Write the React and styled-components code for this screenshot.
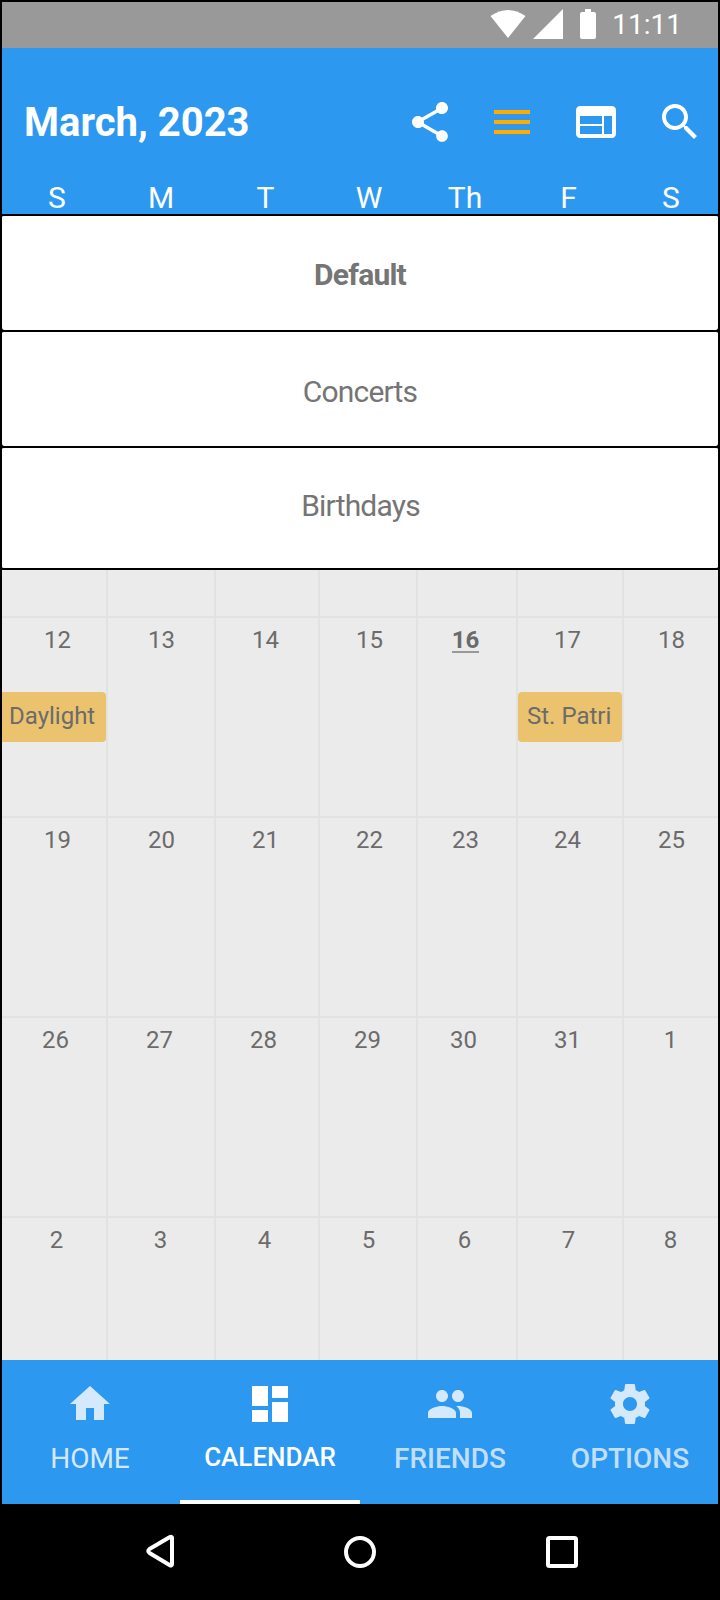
import React from "react";
import styled, { createGlobalStyle, css } from "styled-components";

const Global = createGlobalStyle`
  * { box-sizing: border-box; }
  body { margin: 0; background: #000; }
`;

const Phone = styled.div`
  width: 720px;
  height: 1600px;
  display: flex;
  flex-direction: column;
  border: 2px solid #000;
  border-bottom: 0;
  overflow: hidden;
  background: #000;
  font-family: Roboto, sans-serif;
`;

const StatusBar = styled.div`
  flex: none;
  height: 46px;
  padding: 7px 36px 0 0;
  display: flex;
  justify-content: flex-end;
  align-items: flex-start;
  background: #999;
  color: #fff;
`;

const StatusIcons = styled.svg`
  display: block;
  width: 106px;
  height: 32px;
  margin-right: 16px;
`;

const Clock = styled.span`
  font-size: 28px;
  line-height: 32px;
`;

const Header = styled.header`
  flex: none;
  height: 166px;
  display: flex;
  flex-direction: column;
  background: #2d98f0;
  color: #fff;
`;

const TitleBar = styled.div`
  height: 132px;
  padding: 16px 14px 0 22px;
  display: flex;
  align-items: center;
`;

const Title = styled.h1`
  flex: 1;
  margin: 0;
  padding-top: 2px;
  font-size: 40px;
  line-height: 48px;
  font-weight: 700;
  white-space: nowrap;
`;

const Actions = styled.div`
  display: grid;
  grid-template-columns: 82px 84px 84px 48px;
`;

const Icon = styled.svg`
  display: block;
  flex: none;
  width: 48px;
  height: 48px;
  fill: currentColor;
  color: ${(p) => p.$color || "inherit"};
`;

const columns = css`
  display: grid;
  grid-template-columns: 106px 108px 104px 98px 100px 106px 94px;
`;

const Weekdays = styled.div`
  ${columns}
  height: 34px;
`;

const Weekday = styled.span`
  text-align: center;
  font-size: 30px;
  line-height: 36px;
  margin-left: ${(p) => p.$shift}px;
`;

const Menu = styled.ul`
  flex: none;
  margin: 0 -1px;
  padding: 0;
  height: 356px;
  list-style: none;
  background: #000;
`;

const MenuItem = styled.li`
  height: ${(p) => p.$height}px;
  border: 2px solid #000;
  border-width: 2px 1px 0;
  display: flex;
  align-items: flex-start;
  justify-content: center;
  padding-top: ${(p) => p.$top}px;
  background: #fff;
  border-radius: 3px;
  color: #757575;
  font-size: 30px;
  line-height: 36px;
  letter-spacing: -0.8px;
  font-weight: ${(p) => (p.$selected ? 700 : 400)};
  &:last-child {
    border-bottom-width: 2px;
    padding-left: 1px;
  }
`;

const Calendar = styled.main`
  flex: none;
  height: 790px;
  overflow: hidden;
  background: #ebebeb;
`;

const Week = styled.div`
  ${columns}
  height: ${(p) => (p.$short ? 48 : 200)}px;
`;

const Day = styled.div`
  min-width: 0;
  border-right: 2px solid #e2e2e2;
  border-bottom: 2px solid #e2e2e2;
  padding-top: 7px;
  display: flex;
  flex-direction: column;
  align-items: flex-start;
  &:last-child { border-right: 0; }
`;

const DayNumber = styled.span`
  align-self: center;
  margin-left: ${(p) => p.$shift * 2}px;
  color: #6b6b6b;
  font-size: 24px;
  line-height: 30px;
  font-weight: ${(p) => (p.$today ? 700 : 400)};
  ${(p) => p.$today && css`
    &::after {
      content: "";
      display: block;
      height: 2px;
      margin-top: -4px;
      background: #999;
    }
  `}
`;

const Event = styled.div`
  width: 104px;
  height: 50px;
  margin-top: 37px;
  padding-left: ${(p) => p.$inset}px;
  border-radius: ${(p) => (p.$open ? "0 4px 4px 0" : "4px")};
  background: #ebc26e;
  color: #6b6b6b;
  font-size: 24px;
  line-height: 48px;
  white-space: nowrap;
  overflow: hidden;
`;

const Tabs = styled.nav`
  flex: none;
  height: 144px;
  margin: 0 -2px;
  display: grid;
  grid-template-columns: repeat(4, 180px);
  background: #2d98f0;
`;

const Tab = styled.div`
  display: flex;
  flex-direction: column;
  align-items: center;
  padding-top: 20px;
  color: #d5e9fd;
  ${(p) => p.$active && css`
    color: #fff;
    border-bottom: 4px solid #fff;
  `}
`;

const TabLabel = styled.span`
  margin-top: ${(p) => p.$top}px;
  font-size: ${(p) => p.$size}px;
  line-height: 32px;
  font-weight: ${(p) => p.$weight};
  color: ${(p) => p.$color};
  white-space: nowrap;
`;

const SystemBar = styled.div`
  flex: 1;
  padding: 28px 0 0 139px;
  display: grid;
  grid-template-columns: 199px 202px 40px;
`;

const SystemIcon = styled.svg`
  display: block;
  width: 40px;
  height: 40px;
  fill: none;
  stroke: #fff;
  stroke-width: 4;
  stroke-linejoin: round;
`;

const icons = {
  share: "M18 16.08c-.76 0-1.44.3-1.96.77L8.91 12.7c.05-.23.09-.46.09-.7s-.04-.47-.09-.7l7.05-4.11c.54.5 1.25.81 2.04.81 1.66 0 3-1.34 3-3s-1.34-3-3-3-3 1.34-3 3c0 .24.04.47.09.7L8.04 9.81C7.5 9.31 6.79 9 6 9c-1.66 0-3 1.34-3 3s1.34 3 3 3c.79 0 1.5-.31 2.04-.81l7.12 4.16c-.05.21-.08.43-.08.65 0 1.61 1.31 2.92 2.92 2.92 1.61 0 2.92-1.31 2.92-2.92s-1.31-2.92-2.92-2.92z",
  menu: "M3 18h18v-2H3v2zm0-5h18v-2H3v2zm0-7v2h18V6H3z",
  web: "M20 4H4c-1.1 0-1.99.9-1.99 2L2 18c0 1.1.9 2 2 2h16c1.1 0 2-.9 2-2V6c0-1.1-.9-2-2-2zm-5 14H4v-4h11v4zm0-5H4V9h11v4zm5 5h-4V9h4v9z",
  search: "M15.5 14h-.79l-.28-.27C15.41 12.59 16 11.11 16 9.5 16 5.91 13.09 3 9.5 3S3 5.91 3 9.5 5.91 16 9.5 16c1.61 0 3.09-.59 4.23-1.57l.27.28v.79l5 4.99L20.49 19l-4.99-5zm-6 0C7.01 14 5 11.99 5 9.5S7.01 5 9.5 5 14 7.01 14 9.5 11.99 14 9.5 14z",
  home: "M10 20v-6h4v6h5v-8h3L12 3 2 12h3v8z",
  dashboard: "M3 13h8V3H3v10zm0 8h8v-6H3v6zm10 0h8V11h-8v10zm0-18v6h8V3h-8z",
  people: "M16 11c1.66 0 2.99-1.34 2.99-3S17.66 5 16 5c-1.66 0-3 1.34-3 3s1.34 3 3 3zm-8 0c1.66 0 2.99-1.34 2.99-3S9.66 5 8 5C6.34 5 5 6.34 5 8s1.34 3 3 3zm0 2c-2.33 0-7 1.17-7 3.5V19h14v-2.5c0-2.33-4.67-3.5-7-3.5zm8 0c-.29 0-.62.02-.97.05 1.16.84 1.97 1.97 1.97 3.45V19h6v-2.5c0-2.33-4.67-3.5-7-3.5z",
  settings: "M19.43 12.98c.04-.32.07-.64.07-.98s-.03-.66-.07-.98l2.11-1.65c.19-.15.24-.42.12-.64l-2-3.46c-.12-.22-.39-.3-.61-.22l-2.49 1c-.52-.4-1.08-.73-1.69-.98l-.38-2.65C14.460 2.180 14.250 2 14 2h-4c-.25 0-.46.18-.49.42l-.38 2.65c-.61.25-1.170.59-1.690.98l-2.490-1c-.23-.09-.49 0-.61.22l-2 3.460c-.13.22-.07.49.12.64l2.110 1.650c-.04.32-.07.65-.07.98s.03.66.07.98l-2.110 1.650c-.19.15-.24.42-.12.64l2 3.460c.12.22.39.3.61.22l2.490-1c.52.4 1.080.73 1.690.98l.38 2.650c.03.24.24.42.49.42h4c.25 0 .46-.18.49-.42l.38-2.650c.61-.25 1.170-.59 1.690-.98l2.490 1c.23.09.49 0 .61-.22l2-3.460c.12-.22.07-.49-.12-.64l-2.110-1.650zM12 15.500c-1.930 0-3.500-1.570-3.500-3.500s1.570-3.500 3.500-3.500 3.500 1.570 3.500 3.500-1.570 3.500-3.500 3.500z",
};

const Glyph = ({ name, color }) => (
  <Icon viewBox="0 0 24 24" $color={color}><path d={icons[name]} /></Icon>
);

const weekdays = [["S", 4], ["M", -2], ["T", -5], ["W", 0], ["Th", -6], ["F", -5], ["S", 0]];

const wideShifts = [3.5, 0.5, -1.5, 1.5, -1.5, -2.5, 0.5];

const weeks = [
  {
    days: [12, 13, 14, 15, 16, 17, 18],
    shifts: wideShifts,
    events: {
      12: { title: "Daylight", inset: 7, open: true },
      17: { title: "St. Patri", inset: 9 },
    },
  },
  { days: [19, 20, 21, 22, 23, 24, 25], shifts: wideShifts },
  { days: [26, 27, 28, 29, 30, 31, 1], shifts: [1.5, -1.5, -3.5, -0.5, -3.5, -2.5, -0.5] },
  { days: [2, 3, 4, 5, 6, 7, 8], shifts: [2.5, -0.5, -2.5, 0.5, -2.5, -1.5, -0.5] },
];

const menu = [
  { label: "Default", height: 116, top: 41, selected: true },
  { label: "Concerts", height: 116, top: 42 },
  { label: "Birthdays", height: 124, top: 40 },
];

const tabs = [
  { label: "HOME", icon: "home", size: 28, weight: 400, color: "#d5e9fd", top: 15 },
  { label: "CALENDAR", icon: "dashboard", size: 26, weight: 500, color: "#fff", top: 13, active: true },
  { label: "FRIENDS", icon: "people", size: 28, weight: 500, color: "#c0dffb", top: 15 },
  { label: "OPTIONS", icon: "settings", size: 28, weight: 500, color: "#c0dffb", top: 15 },
];

export default function App() {
  return (
    <Phone>
      <Global />
      <StatusBar>
        <StatusIcons viewBox="490 9 106 32" fill="#fff">
          <path d="M490.500 16Q508 4 525.500 16L508 38Z" />
          <path d="M563 9V39H533Z" />
          <path d="M585 9h6v3h3q2 0 2 2v23q0 2-2 2h-12q-2 0-2-2V14q0-2 2-2h3Z" />
        </StatusIcons>
        <Clock>11:11</Clock>
      </StatusBar>
      <Header>
        <TitleBar>
          <Title>March, 2023</Title>
          <Actions>
            <Glyph name="share" />
            <Glyph name="menu" color="#ffab00" />
            <Glyph name="web" />
            <Glyph name="search" />
          </Actions>
        </TitleBar>
        <Weekdays>
          {weekdays.map(([name, shift], i) => <Weekday key={i} $shift={shift}>{name}</Weekday>)}
        </Weekdays>
      </Header>
      <Menu>
        {menu.map((m) => (
          <MenuItem key={m.label} $height={m.height} $top={m.top} $selected={m.selected}>{m.label}</MenuItem>
        ))}
      </Menu>
      <Calendar>
        <Week $short>
          {weekdays.map((_, i) => <Day key={i} />)}
        </Week>
        {weeks.map((week) => (
          <Week key={week.days[0]}>
            {week.days.map((day, i) => {
              const event = week.events?.[day];
              return (
                <Day key={day}>
                  <DayNumber $shift={week.shifts[i]} $today={day === 16}>{day}</DayNumber>
                  {event && <Event $inset={event.inset} $open={event.open}>{event.title}</Event>}
                </Day>
              );
            })}
          </Week>
        ))}
      </Calendar>
      <Tabs>
        {tabs.map((t) => (
          <Tab key={t.label} $active={t.active}>
            <Glyph name={t.icon} />
            <TabLabel $size={t.size} $weight={t.weight} $color={t.color} $top={t.top}>{t.label}</TabLabel>
          </Tab>
        ))}
      </Tabs>
      <SystemBar>
        <SystemIcon viewBox="0 0 40 40"><path d="M31 5.500V32Q31 34.500 28.500 33L8.500 21Q6 19 8.500 17L28.500 5.200Q31 4 31 6Z" /></SystemIcon>
        <SystemIcon viewBox="0 0 40 40"><circle cx="20" cy="20" r="14" /></SystemIcon>
        <SystemIcon viewBox="0 0 40 40"><rect x="6" y="6" width="28" height="28" rx="1.500" /></SystemIcon>
      </SystemBar>
    </Phone>
  );
}
